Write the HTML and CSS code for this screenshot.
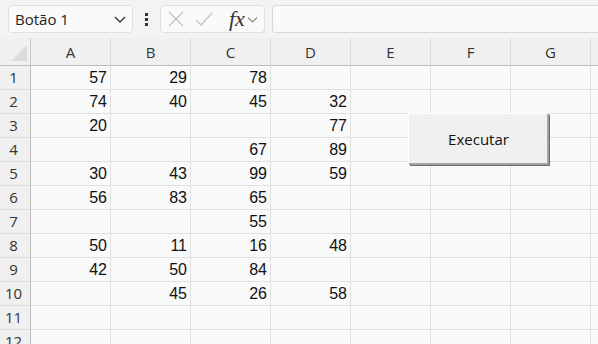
FILE: index.html
```html
<!DOCTYPE html>
<html lang="pt">
<head>
  <meta charset="UTF-8" />
  <title>Planilha</title>
  <link rel="stylesheet" href="styles.css">
</head>
<body>

  <!-- Formula bar -->
  <div class="toolbar">
    <div class="name-box">
      <span>Botão 1</span>
      <svg width="14" height="14" viewBox="0 0 14 14"><path d="M2 5l5 5 5-5" fill="none" stroke="#333" stroke-width="1.3"/></svg>
    </div>
    <div class="dots"><i></i><i></i><i></i></div>
    <div class="fx-box">
      <svg width="16" height="16" viewBox="0 0 16 16"><path d="M1 1l14 14M15 1L1 15" stroke="#c4c4c4" stroke-width="1.3"/></svg>
      <svg width="18" height="16" viewBox="0 0 18 16"><path d="M1 9l5 5L17 2" fill="none" stroke="#c4c4c4" stroke-width="1.3"/></svg>
      <span class="fx">fx</span>
      <svg width="11" height="11" viewBox="0 0 11 11"><path d="M1 3.5l4.5 4.5 4.5-4.5" fill="none" stroke="#888" stroke-width="1.1"/></svg>
    </div>
    <div class="formula-input"></div>
  </div>

  <!-- Grid -->
  <div class="sheet">
    <div class="corner"><span class="tri"></span></div>
    <div class="col-head">A</div>
    <div class="col-head">B</div>
    <div class="col-head">C</div>
    <div class="col-head">D</div>
    <div class="col-head">E</div>
    <div class="col-head">F</div>
    <div class="col-head">G</div>
    <div class="col-head"></div>
  </div>
  <div class="sheet body" id="rows"></div>

  <button class="macro-btn">Executar</button>

  <script>
    var data = [
      [57, 29, 78, ''],
      [74, 40, 45, 32],
      [20, '', '', 77],
      ['', '', 67, 89],
      [30, 43, 99, 59],
      [56, 83, 65, ''],
      ['', '', 55, ''],
      [50, 11, 16, 48],
      [42, 50, 84, ''],
      ['', 45, 26, 58],
      ['', '', '', ''],
      ['', '', '', '']
    ];
    var rows = document.getElementById('rows');
    data.forEach(function (r, i) {
      var html = '<div class="row-head">' + (i + 1) + '</div>';
      for (var c = 0; c < 8; c++) {
        html += '<div class="cell">' + (c < 4 ? r[c] : '') + '</div>';
      }
      rows.insertAdjacentHTML('beforeend', html);
    });
  </script>
</body>
</html>
```

FILE: styles.css
```css
body {
  margin: 0;
  background: #fafafa;
  font-family: "Open Sans", "Noto Sans", sans-serif;
  width: 598px;
  height: 344px;
  overflow: hidden;
  position: relative;
}

.toolbar {
  display: flex; align-items: center;
  height: 38px; padding: 0 0 0 8px; box-sizing: border-box;
  background: #f3f3f3;
}
.name-box {
  width: 125px; height: 28px; box-sizing: border-box;
  border: 1px solid #e0e0e0; border-radius: 4px; background: #fafafa;
  display: flex; align-items: center; justify-content: space-between;
  padding: 0 5px 0 6px; font-size: 15px; color: #222;
}
.dots {
  width: 27px; display: flex; flex-direction: column; align-items: center; gap: 2px;
}
.dots i { width: 3px; height: 3px; background: #333; display: block; }
.fx-box {
  width: 105px; height: 28px; box-sizing: border-box;
  border: 1px solid #e0e0e0; border-radius: 4px; background: #fafafa;
  display: flex; align-items: center; gap: 11px; padding-left: 7px;
}
.fx-box .fx {
  font-family: "Liberation Serif", serif; font-style: italic; font-size: 22px;
  color: #333; margin-left: 5px; margin-right: -9px; line-height: 1;
}
.formula-input {
  flex: 1; height: 28px; margin-left: 7px; box-sizing: border-box;
  border: 1px solid #d8d8d8; border-right: none; border-radius: 4px 0 0 4px; background: #fafafa;
}

.sheet {
  display: grid;
  grid-template-columns: 31px repeat(7, 80px) 8px;
}
.corner, .col-head {
  height: 28px; box-sizing: border-box; background: #f0f0f0;
  border-bottom: 1px solid #bdbdbd;
}
.corner { border-right: 1px solid #c8c8c8; position: relative; }
.corner .tri {
  position: absolute; right: 3px; bottom: 4px;
  width: 0; height: 0;
  border-left: 16px solid transparent; border-bottom: 16px solid #dcdcdc;
}
.col-head {
  border-right: 1px solid #dcdcdc;
  display: flex; align-items: flex-end; justify-content: center;
  padding-bottom: 3px; font-size: 15px; color: #333;
}
.row-head {
  height: 24px; box-sizing: border-box; background: #f0f0f0;
  border-right: 1px solid #bdbdbd; border-bottom: 1px solid #dcdcdc;
  font-size: 15px; color: #333; text-align: center; padding-right: 3px; line-height: 23px;
}
.cell {
  height: 24px; box-sizing: border-box;
  border-right: 1px solid #e1e1e1; border-bottom: 1px solid #e1e1e1;
  font-family: "Liberation Sans", Arial, sans-serif; font-size: 16px; color: #111;
  text-align: right; padding-right: 3px; line-height: 24px;
}

.macro-btn {
  position: absolute; left: 408px; top: 113px;
  width: 140px; height: 51px;
  background: #f0f0f0; color: #111;
  font-family: "Open Sans", "Noto Sans", sans-serif; font-size: 15px;
  border: none; border-top: 1px solid #fff; border-left: 1px solid #fff;
  box-shadow: 1px 1px 0 #a0a0a0, 2px 2px 0 #6b6b6b, inset -1px -1px 0 #a8a8a8;
  padding: 0;
}
```
